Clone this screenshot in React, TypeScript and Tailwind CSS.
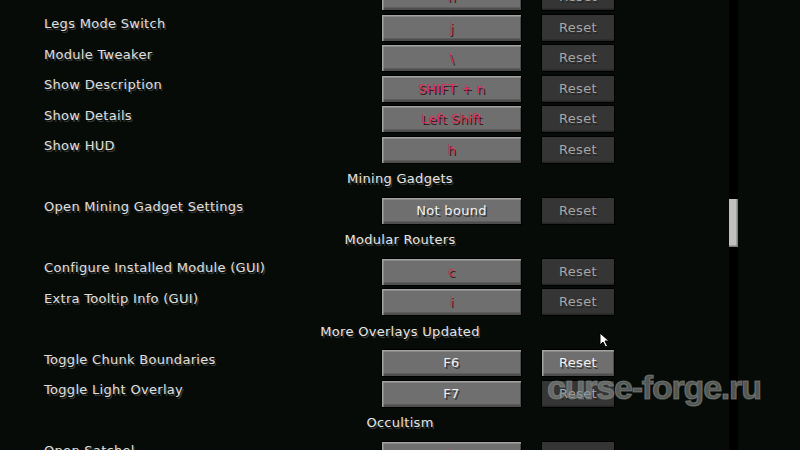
import React from 'react';

type Row =
  | { kind: 'key'; label: string; bind: string; conflict?: boolean; resetOn?: boolean }
  | { kind: 'cat'; label: string };

const ROWS: Row[] = [
  { kind: 'key', label: '', bind: 'n', conflict: true },
  { kind: 'key', label: 'Legs Mode Switch', bind: 'j', conflict: true },
  { kind: 'key', label: 'Module Tweaker', bind: '\\', conflict: true },
  { kind: 'key', label: 'Show Description', bind: 'SHIFT + n', conflict: true },
  { kind: 'key', label: 'Show Details', bind: 'Left Shift', conflict: true },
  { kind: 'key', label: 'Show HUD', bind: 'h', conflict: true },
  { kind: 'cat', label: 'Mining Gadgets' },
  { kind: 'key', label: 'Open Mining Gadget Settings', bind: 'Not bound' },
  { kind: 'cat', label: 'Modular Routers' },
  { kind: 'key', label: 'Configure Installed Module (GUI)', bind: 'c', conflict: true },
  { kind: 'key', label: 'Extra Tooltip Info (GUI)', bind: 'i', conflict: true },
  { kind: 'cat', label: 'More Overlays Updated' },
  { kind: 'key', label: 'Toggle Chunk Boundaries', bind: 'F6', resetOn: true },
  { kind: 'key', label: 'Toggle Light Overlay', bind: 'F7' },
  { kind: 'cat', label: 'Occultism' },
  { kind: 'key', label: 'Open Satchel', bind: 'b', conflict: true },
];

const font = "font-['DejaVu_Sans',sans-serif] text-[13px] leading-none tracking-[0.3px]";

const KeyRow: React.FC<{ row: Extract<Row, { kind: 'key' }> }> = ({ row }) => (
  <div className="flex h-[30.5px] shrink-0">
    <div className={`w-[381px] pl-[44px] pt-[3.5px] text-[#e0e0e0] [text-shadow:1.5px_1.5px_0_#383838] ${font}`}>
      {row.label}
    </div>
    <div
      className={`flex h-[28px] w-[141px] items-center justify-center border border-black bg-[#6f6f6f] pb-[1px] shadow-[inset_1.5px_1.5px_0_#a3a3a3,inset_-1px_-2.5px_0_#4e4e4e] ${font} ${
        row.conflict
          ? 'text-[#d8325a] [text-shadow:1.5px_1.5px_0_#3f1a22]'
          : 'text-[#f0f0f0] [text-shadow:1.5px_1.5px_0_#3a3a3a]'
      }`}
    >
      {row.bind}
    </div>
    <div
      className={`ml-[19px] flex h-[28px] w-[74px] items-center justify-center border border-black pb-[1px] ${font} ${
        row.resetOn
          ? 'bg-[#6f6f6f] text-[#f2f2f2] shadow-[inset_1.5px_1.5px_0_#a3a3a3,inset_-1px_-2.5px_0_#4e4e4e] [text-shadow:1.5px_1.5px_0_#3a3a3a]'
          : 'bg-[#353535] text-[#a6a6a6] shadow-[inset_0_-1.5px_0_#262626] [text-shadow:1.5px_1.5px_0_#262626]'
      }`}
    >
      Reset
    </div>
  </div>
);

const CatRow: React.FC<{ label: string }> = ({ label }) => (
  <div className={`h-[30.5px] shrink-0 pl-[71px] pt-[6px] text-center text-[#e6e6e6] [text-shadow:1.5px_1.5px_0_#383838] ${font}`}>
    {label}
  </div>
);

export default function App() {
  return (
    <div className="relative flex h-[450px] w-[800px] overflow-hidden bg-[#060b07]">
      <div className="flex w-[729px] flex-col -mt-[17px]">
        {ROWS.map((r, i) =>
          r.kind === 'cat' ? <CatRow key={i} label={r.label} /> : <KeyRow key={i} row={r} />
        )}
      </div>

      {/* scrollbar */}
      <div className="h-full w-[9px] bg-black">
        <div className="mt-[199px] h-[48px] w-[9px] bg-[#c0c0c0] shadow-[inset_-1.5px_-1.5px_0_#7e7e7e]" />
      </div>

      {/* watermark */}
      <div className="pointer-events-none absolute left-[547px] top-[370px] font-['Liberation_Sans',sans-serif] text-[34px] font-bold leading-none tracking-[-1.2px] text-[rgba(135,140,135,0.62)] [-webkit-text-stroke:1.2px_rgba(135,140,135,0.62)]">
        curse-forge.ru
      </div>

      {/* mouse cursor */}
      <svg className="absolute left-[599px] top-[332px]" width="11" height="16" viewBox="0 0 11 16">
        <path d="M1 1 L1 13 L4 10 L6.5 15 L8.5 14 L6 9 L10 9 Z" fill="#fff" stroke="#000" strokeWidth="1" />
      </svg>
    </div>
  );
}
